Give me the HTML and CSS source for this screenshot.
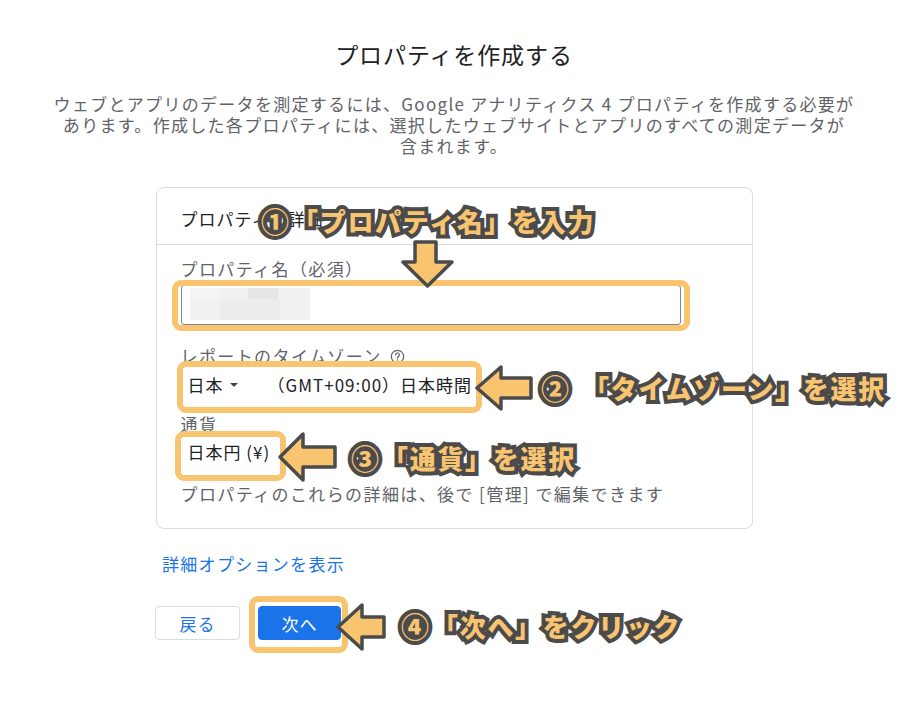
FILE: index.html
```html
<!DOCTYPE html>
<html lang="ja">
<head>
<meta charset="utf-8">
<title>プロパティを作成する</title>
<link rel="stylesheet" href="styles.css">
</head>
<body>
<div class="page">
  <h1 class="title">プロパティを作成する</h1>
  <p class="lead">ウェブとアプリのデータを測定するには、Google アナリティクス 4 プロパティを作成する必要が<br>あります。作成した各プロパティには、選択したウェブサイトとアプリのすべての測定データが<br>含まれます。</p>

  <div class="card">
    <div class="card-head">プロパティの詳細</div>
    <div class="card-body">
      <div class="label">プロパティ名（必須）</div>
      <div class="input">
        <div class="blur"><span class="b1"></span><span class="b2"></span><span class="b3"></span></div>
      </div>
      <div class="label label-tz">レポートのタイムゾーン
        <svg class="help" viewBox="0 0 16 16" width="15" height="15"><circle cx="8" cy="8" r="6.6" fill="none" stroke="#5f6368" stroke-width="1.3"/><path d="M6 6.3a2 2 0 1 1 2.8 1.8c-.6.3-.8.7-.8 1.3v.4" fill="none" stroke="#5f6368" stroke-width="1.3" stroke-linecap="round"/><circle cx="8" cy="11.6" r=".8" fill="#5f6368"/></svg>
      </div>
      <div class="value tz">
        <span class="country">日本 <span class="caret"></span></span>
        <span class="zone">（GMT+09:00）日本時間</span>
      </div>
      <div class="label label-cur">通貨</div>
      <div class="value cur">日本円 (¥)</div>
      <div class="hint">プロパティのこれらの詳細は、後で [管理] で編集できます</div>
    </div>
  </div>

  <div class="bottom">
    <a class="more" href="#">詳細オプションを表示</a>
    <div class="buttons">
      <button class="btn btn-back">戻る</button>
      <button class="btn btn-next">次へ</button>
    </div>
  </div>

  <!-- annotation overlay -->
  <div class="hl hl-name"></div>
  <div class="hl hl-tz"></div>
  <div class="hl hl-cur"></div>
  <div class="hl hl-next"></div>

  <svg class="arrows" viewBox="0 0 908 720" width="908" height="720">
    <g fill="#f8c470" stroke="#4b4b4b" stroke-width="3.5" stroke-linejoin="round">
      <polygon points="415,242 436,242 436,262 452,262 427.5,286 403,262 415,262"/>
      <polygon points="477,388 501,367 501,378 531,378 531,398 501,398 501,409"/>
      <polygon points="280,457 303,434 303,447 335,447 335,467 303,467 303,480"/>
      <polygon points="338,627 362,605 362,617 384,617 384,637 362,637 362,649"/>
    </g>
  </svg>

  <div class="note n1"><span class="num">①</span><span>「プロパティ名」を入力</span></div>
  <div class="note n2"><span class="num">②</span><span>「タイムゾーン」を選択</span></div>
  <div class="note n3"><span class="num">③</span><span>「通貨」を選択</span></div>
  <div class="note n4"><span class="num">④</span><span>「次へ」をクリック</span></div>
</div>
</body>
</html>
```

FILE: styles.css
```css
* { box-sizing: border-box; }
html, body { margin: 0; padding: 0; background: #fff; }
body {
  font-family: "Noto Sans CJK JP", "Noto Sans", sans-serif;
  color: #202124;
}
.page {
  position: relative;
  width: 908px;
  height: 720px;
  padding-top: 39px;
  overflow: hidden;
}
.title {
  margin: 0;
  text-align: center;
  font-size: 23px;
  line-height: 30px;
  font-weight: 400;
  letter-spacing: 0.9px;
  color: #202124;
}
.lead {
  margin: 24px 0 0;
  text-align: center;
  font-size: 17px;
  line-height: 21px;
  letter-spacing: 1.3px;
  color: #5f6368;
}
.card {
  width: 597px;
  margin: 31px auto 0;
  border: 1px solid #dadce0;
  border-radius: 8px;
}
.card-head {
  padding: 19px 24px 13px;
  font-size: 17px;
  line-height: 24px;
  letter-spacing: 1px;
  border-bottom: 1px solid #dadce0;
}
.card-body {
  padding: 13px 24px 23px;
  font-size: 17px;
  letter-spacing: 1.4px;
}
.label {
  line-height: 22px;
  color: #5f6368;
}
.input {
  margin-top: 5px;
  width: 500px;
  height: 40px;
  border: 1px solid #80868b;
  border-radius: 3px;
  padding: 2px 8px;
}
.blur {
  position: relative;
  width: 120px;
  height: 32px;
  background: #f1f1f1;
}
.blur span { position: absolute; display: block; }
.blur .b1 { left: 58px; top: 0; width: 30px; height: 11px; background: #e6e6e6; }
.blur .b2 { left: 0; top: 0; width: 30px; height: 11px; background: #f5f5f5; }
.blur .b3 { left: 30px; top: 11px; width: 60px; height: 21px; background: #ececec; }
.label-tz {
  margin-top: 20px;
  display: flex;
  align-items: center;
  gap: 8px;
}
.help { display: block; }
.value {
  height: 30px;
  line-height: 30px;
  padding-left: 7px;
  color: #202124;
}
.tz {
  margin-top: 3px;
  display: flex;
  letter-spacing: 1px;
}
.country { width: 80px; display: inline-flex; align-items: center; gap: 4px; }
.caret {
  display: inline-block;
  width: 0; height: 0;
  border-left: 4px solid transparent;
  border-right: 4px solid transparent;
  border-top: 4px solid #444;
  margin-left: 2px;
}
.label-cur { margin-top: 13px; }
.cur { margin-top: 2px; letter-spacing: 1px; }
.hint {
  margin-top: 16px;
  line-height: 22px;
  color: #5f6368;
}
.bottom {
  width: 598px;
  margin: 0 auto;
}
.more {
  display: block;
  margin-top: 24px;
  padding-left: 7px;
  font-size: 17px;
  line-height: 22px;
  letter-spacing: 1.3px;
  color: #1a73e8;
  text-decoration: none;
}
.buttons {
  margin-top: 31px;
  display: flex;
  gap: 18px;
}
.btn {
  height: 34px;
  border-radius: 4px;
  font-family: inherit;
  font-size: 17px;
  letter-spacing: 1px;
  padding: 0;
  cursor: pointer;
}
.btn-back {
  width: 85px;
  background: #fff;
  border: 1px solid #dadce0;
  color: #1a73e8;
}
.btn-next {
  width: 83px;
  background: #1a73e8;
  border: 1px solid #1a73e8;
  color: #fff;
}

/* annotation overlay */
.hl {
  position: absolute;
  border: 6px solid #f8c470;
  border-radius: 9px;
}
.hl-name { left: 172px; top: 280px; width: 518px; height: 51px; }
.hl-tz   { left: 177px; top: 361px; width: 305px; height: 52px; }
.hl-cur  { left: 175px; top: 431px; width: 111px; height: 50px; }
.hl-next { left: 249px; top: 596px; width: 99px; height: 57px; }
.arrows {
  position: absolute;
  left: 0; top: 0;
  pointer-events: none;
}
.note {
  position: absolute;
  display: flex;
  align-items: center;
  font-size: 26px;
  line-height: 30px;
  font-weight: 900;
  letter-spacing: 1.7px;
  color: #f8c470;
  -webkit-text-stroke: 8px #4b4b4b;
  paint-order: stroke fill;
  white-space: nowrap;
}
.num { font-size: 28px; letter-spacing: 0; }
.n1 { left: 261px; top: 206px; gap: 3px; }
.n2 { left: 541px; top: 373px; gap: 14px; }
.n3 { left: 351px; top: 443px; gap: 3px; }
.n4 { left: 401px; top: 611px; gap: 3px; }
```
